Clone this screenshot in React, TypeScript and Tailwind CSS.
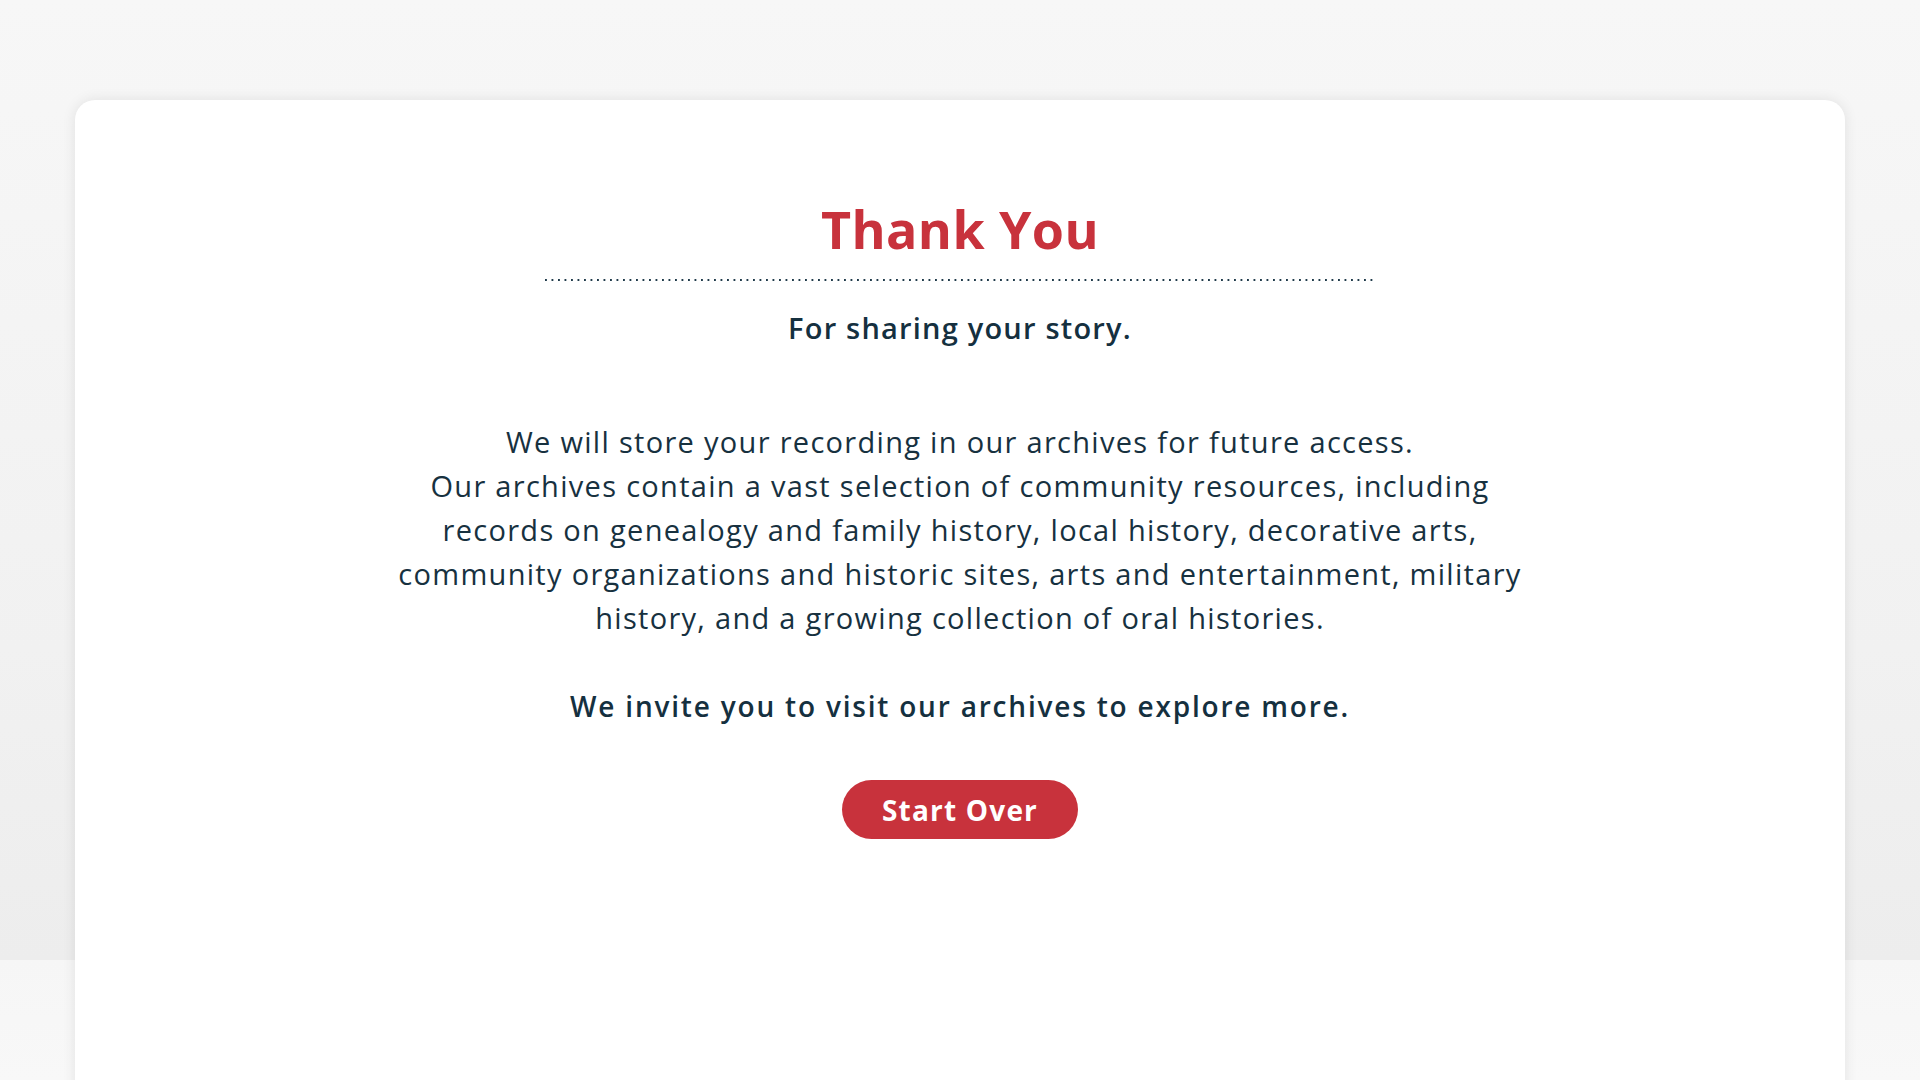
import React from 'react';

const bodyLines = [
  'We will store your recording in our archives for future access.',
  'Our archives contain a vast selection of community resources, including',
  'records on genealogy and family history, local history, decorative arts,',
  'community organizations and historic sites, arts and entertainment, military',
  'history, and a growing collection of oral histories.',
];

const ThankYou: React.FC = () => {
  return (
    <div className="h-screen w-full overflow-hidden bg-[linear-gradient(to_bottom,#f7f7f7_0%,#f1f1f1_60%,#ededed_88.9%,#f6f6f6_88.9%,#f8f8f8_100%)] px-[75px] pt-[100px] font-['Open_Sans',sans-serif]">
      <div className="min-h-[1100px] rounded-[20px] bg-white shadow-[0_0_14px_rgba(0,0,0,0.09)] pt-[99px] flex flex-col items-center text-center">
        <h1 className="text-[52px] leading-[60px] font-bold tracking-[0.4px] text-[#c8323c]">Thank You</h1>

        {/* dotted divider */}
        <div className="mt-[20px] h-[2px] w-[830px] bg-[linear-gradient(to_right,#1f3a4a_2px,transparent_2px)] bg-[length:6.5px_2px]" />

        <p className="mt-[27px] text-[29px] leading-[40px] font-semibold tracking-[1.2px] text-[#15303f]">
          For sharing your story.
        </p>

        <div className="mt-[72px] text-[29px] leading-[44px] font-[370] tracking-[1.3px] text-[#17313f]">
          {bodyLines.map((line, i) => (
            <span key={i} className="block">{line}</span>
          ))}
        </div>

        <p className="mt-[44px] text-[28px] leading-[44px] font-semibold tracking-[1.8px] text-[#15303f]">
          We invite you to visit our archives to explore more.
        </p>

        <button className="mt-[52px] h-[59px] w-[236px] rounded-full bg-[#c8323c] text-[28px] font-bold tracking-[1.2px] text-white">
          Start Over
        </button>
      </div>
    </div>
  );
};

export default function App() {
  return <ThankYou />;
}
